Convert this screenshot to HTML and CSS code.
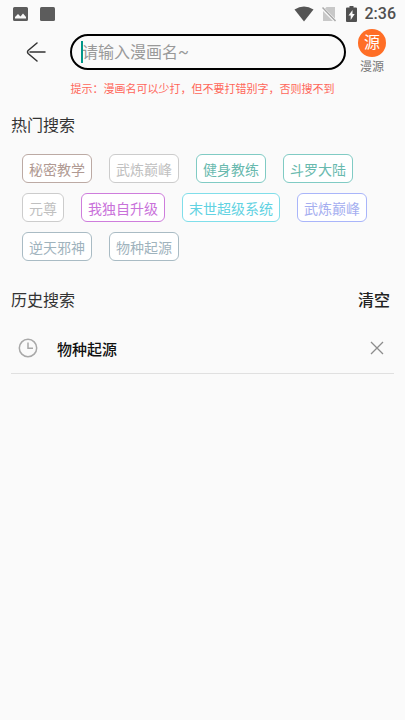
FILE: index.html
```
<!DOCTYPE html>
<html lang="zh-CN">
<head>
<meta charset="utf-8">
<meta name="viewport" content="width=device-width, initial-scale=1">
<title>漫画搜索</title>
<link rel="stylesheet" href="styles.css">
</head>
<body>
<div class="status">
  <svg class="status-left" width="42" height="16" viewBox="0 0 42 16" aria-hidden="true">
    <path fill="#5c5c5c" fill-rule="evenodd" d="M1.500 1h12Q15 1 15 2.500v11Q15 15 13.500 15h-12Q0 15 0 13.500v-11Q0 1 1.500 1ZM2 12.500h11V11L10 7.500 7.500 10.500 5 8 2 11Z"/>
    <rect x="27" y="1" width="15" height="14" rx="1.500" fill="#5c5c5c"/>
  </svg>
  <div class="status-right">
    <svg width="20" height="16" viewBox="0 0 20 16" aria-hidden="true"><path fill="#555" d="M.5 3.500Q10-2.500 19.500 3.500L10 15.500Z"/></svg>
    <svg width="16" height="16" viewBox="0 0 16 16" aria-hidden="true"><path fill="#c8c8c8" d="M4.500 1H13v11.500L3 2.500ZM1 5l10 10H1Z"/><path d="M.5 1.500 13.500 15" stroke="#a8a8a8" stroke-width="1.500"/></svg>
    <svg width="11" height="16" viewBox="0 0 11 16" aria-hidden="true"><path fill="#505050" fill-rule="evenodd" d="M3.500 0h4v1.500H10q1 0 1 1V15q0 1-1 1H1q-1 0-1-1V2.500q0-1 1-1h2.500ZM6.500 4 2.500 9.500h2.200V14l4-6H6.500Z"/></svg>
    <span class="clock">2:36</span>
  </div>
</div>
<header class="top">
  <button class="back" type="button" aria-label="返回">
    <svg width="20" height="20" viewBox="0 0 20 20" fill="none" stroke="#333" stroke-width="1.500" stroke-linecap="round" stroke-linejoin="round"><path d="M11 1 2.400 8.300Q.6 10 2.400 11.700L11 19M4 10h15"/></svg>
  </button>
  <div class="field">
    <span class="caret"></span>
    <input type="text" placeholder="请输入漫画名~" aria-label="请输入漫画名">
  </div>
  <button class="source" type="button"><span class="badge">源</span><span>漫源</span></button>
</header>
<p class="hint">提示：漫画名可以少打，但不要打错别字，否则搜不到</p>
<main>
  <section>
    <h2>热门搜索</h2>
    <div class="tags">
      <button type="button" class="tag brown">秘密教学</button>
      <button type="button" class="tag gray">武炼巅峰</button>
      <button type="button" class="tag teal">健身教练</button>
      <button type="button" class="tag teal">斗罗大陆</button>
      <button type="button" class="tag gray">元尊</button>
      <button type="button" class="tag purple">我独自升级</button>
      <button type="button" class="tag cyan">末世超级系统</button>
      <button type="button" class="tag indigo">武炼巅峰</button>
      <button type="button" class="tag slate">逆天邪神</button>
      <button type="button" class="tag slate">物种起源</button>
    </div>
  </section>
  <section>
    <div class="history-head">
      <h2>历史搜索</h2>
      <button type="button" class="clear">清空</button>
    </div>
    <ul class="history">
      <li>
        <svg width="20" height="20" viewBox="0 0 20 20" fill="none" stroke="#a8a8a8" stroke-width="1.500" aria-hidden="true"><circle cx="10" cy="10" r="8.700"/><path d="M10 4.500V10.300h5"/></svg>
        <a href="#">物种起源</a>
        <button type="button" aria-label="删除">
          <svg width="14" height="14" viewBox="0 0 14 14" fill="none" stroke="#8c8c8c" stroke-width="1.300"><path d="M1 1l12 12M13 1 1 13"/></svg>
        </button>
      </li>
    </ul>
  </section>
</main>
</body>
</html>
```
FILE: styles.css
```
* {
  box-sizing: border-box;
}

body {
  margin: 0;
  min-height: 100vh;
  background: #fafafa;
  color: #333;
  font-family: Roboto, "Noto Sans CJK SC", sans-serif;
}

button {
  margin: 0;
  padding: 0;
  border: 0;
  background: none;
  color: inherit;
  font: inherit;
}

svg {
  display: block;
}

.status {
  display: flex;
  align-items: center;
  justify-content: space-between;
  height: 28px;
  padding: 0 9px 0 13px;
}

.status-right {
  display: flex;
  align-items: center;
  gap: 8px;
}

.clock {
  color: #505050;
  font-size: 16px;
  font-weight: 500;
  line-height: 20px;
}

.top {
  display: flex;
  align-items: center;
  height: 48px;
  padding: 0 19px 0 26px;
}

.back {
  width: 44px;
}

.field {
  position: relative;
  flex: 1;
  min-width: 0;
  height: 36px;
  padding: 0 10px;
  border: 2px solid #000;
  border-radius: 18px;
}

.field input {
  width: 100%;
  height: 32px;
  padding: 0;
  border: 0;
  outline: 0;
  background: none;
  color: #333;
  font: inherit;
  font-size: 16px;
}

.field input::placeholder {
  color: #999;
  opacity: 1;
}

.caret {
  position: absolute;
  top: 5px;
  left: 9px;
  width: 2px;
  height: 22px;
  background: #009688;
}

.source {
  display: flex;
  flex-direction: column;
  align-items: center;
  width: 28px;
  margin-left: 12px;
  color: #777;
  font-size: 12px;
  line-height: 16px;
}

.badge {
  width: 28px;
  height: 28px;
  margin-bottom: 2px;
  border-radius: 50%;
  background: #ff6e26;
  color: #fff;
  font-size: 16px;
  line-height: 28px;
}

.hint {
  margin: 5px 0 0;
  color: #ff6659;
  font-size: 11px;
  line-height: 18px;
  text-align: center;
}

main {
  padding: 0 11px;
}

h2 {
  margin: 0;
  font-size: 16px;
  font-weight: 400;
  line-height: 24px;
}

section {
  margin-top: 15px;
}

section + section {
  margin-top: 28px;
}

.tags {
  display: flex;
  flex-wrap: wrap;
  gap: 10px 17px;
  padding: 16px 11px 0;
}

.tag {
  height: 29px;
  padding: 0 6px;
  border: 1px solid;
  border-radius: 6px;
  background: #fff;
  font-size: 14px;
}

.brown {
  border-color: #bcaaa4;
  color: #b09a93;
}

.gray {
  border-color: #ccc;
  color: #c0c0c0;
}

.teal {
  border-color: #80cbc4;
  color: #68b9ae;
}

.purple {
  border-color: #ce7ddc;
  color: #c972da;
}

.cyan {
  border-color: #80deea;
  color: #62d2e2;
}

.indigo {
  border-color: #a9b5fa;
  color: #a5aef0;
}

.slate {
  border-color: #a9bbc4;
  color: #9fb3bd;
}

.history-head {
  display: flex;
  justify-content: space-between;
  padding-right: 4px;
}

.clear {
  color: #222;
  font-size: 16px;
  font-weight: 500;
  line-height: 24px;
}

.history {
  margin: 0;
  padding: 0;
  list-style: none;
}

.history li {
  display: flex;
  align-items: center;
  height: 61px;
  padding: 10px 10px 0 7px;
  border-bottom: 1px solid #e0e0e0;
}

.history a {
  flex: 1;
  margin-left: 19px;
  color: #111;
  font-size: 15px;
  font-weight: 500;
  text-decoration: none;
}
```
